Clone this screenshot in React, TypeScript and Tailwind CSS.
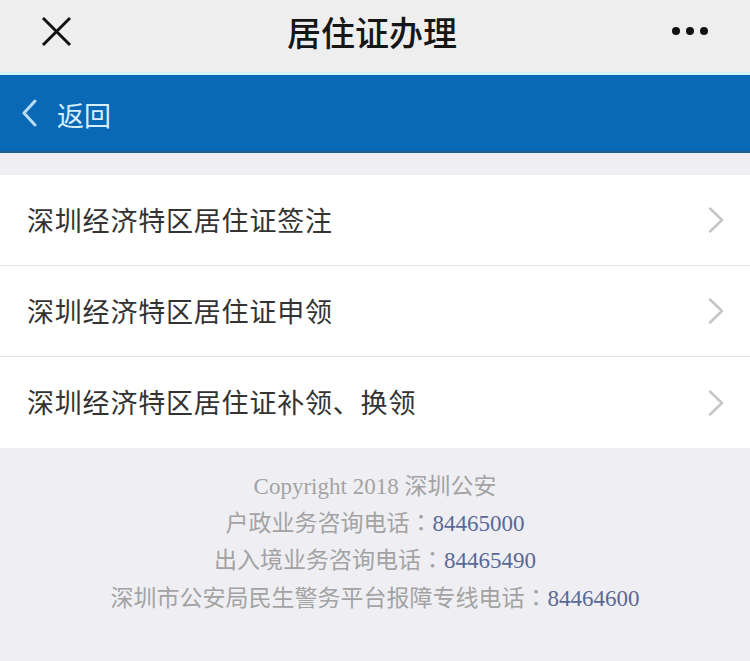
import React from "react";

const items = [
  "深圳经济特区居住证签注",
  "深圳经济特区居住证申领",
  "深圳经济特区居住证补领、换领",
];

const cjk = { fontFamily: '"Noto Sans CJK SC", "Noto Sans", sans-serif' };
const footerFont = { fontFamily: '"Liberation Serif", "Noto Sans CJK SC", serif' };
const colonFont = { fontFamily: '"Noto Sans CJK JP", sans-serif' };

function Colon() {
  return <span className="leading-none" style={colonFont}>：</span>;
}

export default function App() {
  return (
    <div className="w-[750px] h-[661px] bg-[#efeff3] overflow-hidden" style={cjk}>
      {/* top bar */}
      <div className="h-[72px] bg-[#efeeee] flex items-center justify-between pl-[41px] pr-[40px] pb-[10px]">
        <svg width="31" height="31" viewBox="0 0 31 31">
          <path d="M2 2 L29 29 M29 2 L2 29" stroke="#111" strokeWidth="3" fill="none" />
        </svg>
        <h1 className="text-[34px] font-medium text-[#161616]">居住证办理</h1>
        <div className="flex gap-[6px] pr-[2px]">
          <span className="w-[8px] h-[8px] rounded-full bg-[#111]" />
          <span className="w-[8px] h-[8px] rounded-full bg-[#111]" />
          <span className="w-[8px] h-[8px] rounded-full bg-[#111]" />
        </div>
      </div>

      {/* back bar */}
      <div className="h-[3px] bg-[#d4f0fb]" />
      <div className="h-[78px] bg-[#0a69b6] flex items-center pl-[21px] gap-[20px] border-b-2 border-[#1d5f94]">
        <svg width="16" height="28" viewBox="0 0 16 28">
          <path d="M14 2 L3 14 L14 26" stroke="#b8dcf5" strokeWidth="3" fill="none" strokeLinecap="round" strokeLinejoin="round" />
        </svg>
        <span className="text-[27px] text-[#d6efff] pt-[4px]">返回</span>
      </div>

      {/* list */}
      <div className="mt-[22px] bg-white">
        {items.map((t, i) => (
          <div
            key={t}
            className={`h-[91px] flex items-center justify-between pl-[27px] pr-[26px] ${i < items.length - 1 ? "border-b border-[#e6e6e6]" : ""}`}
          >
            <span className="text-[27px] text-[#333] tracking-[0.8px]">{t}</span>
            <svg width="16" height="26" viewBox="0 0 16 26">
              <path d="M2 1.5 L14 13 L2 24.5" stroke="#c6c6c6" strokeWidth="2.5" fill="none" strokeLinecap="round" strokeLinejoin="round" />
            </svg>
          </div>
        ))}
      </div>

      {/* footer */}
      <div className="pt-[20px] flex flex-col items-center text-[23px] text-[#a3a3a3]" style={footerFont}>
        <p className="h-[37px] leading-[37px] overflow-hidden">Copyright 2018 深圳公安</p>
        <p className="h-[37px] leading-[37px] overflow-hidden">
          户政业务咨询电话<Colon /><span className="text-[#5a6896]">84465000</span>
        </p>
        <p className="h-[38px] leading-[38px] overflow-hidden">
          出入境业务咨询电话<Colon /><span className="text-[#5a6896]">84465490</span>
        </p>
        <p className="h-[38px] leading-[38px] overflow-hidden">
          深圳市公安局民生警务平台报障专线电话<Colon /><span className="text-[#5a6896]">84464600</span>
        </p>
      </div>
    </div>
  );
}
